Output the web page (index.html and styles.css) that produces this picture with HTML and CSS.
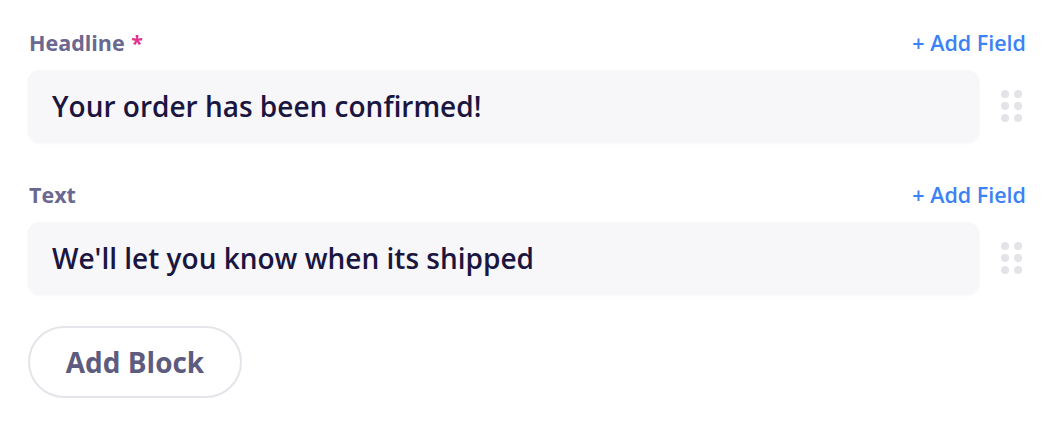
FILE: index.html
```html
<!DOCTYPE html>
<html>
<head>
<meta charset="utf-8">
<link rel="stylesheet" href="styles.css">
</head>
<body>
<div class="form">
  <div class="field">
    <div class="field-head">
      <span class="label">Headline <span class="req">*</span></span>
      <a class="add-field">+ Add Field</a>
    </div>
    <div class="field-row">
      <div class="input">Your order has been confirmed!</div>
      <div class="handle"><i></i><i></i><i></i><i></i><i></i><i></i></div>
    </div>
  </div>
  <div class="field">
    <div class="field-head">
      <span class="label">Text</span>
      <a class="add-field">+ Add Field</a>
    </div>
    <div class="field-row">
      <div class="input">We'll let you know when its shipped</div>
      <div class="handle"><i></i><i></i><i></i><i></i><i></i><i></i></div>
    </div>
  </div>
  <button class="add-block">Add Block</button>
</div>
</body>
</html>
```

FILE: styles.css
```css
html, body {
  margin: 0;
  padding: 0;
  background: #ffffff;
}
body {
  font-family: "Open Sans", "Noto Sans", sans-serif;
}
.form {
  padding: 28px 30px 0 28px;
  display: flex;
  flex-direction: column;
}
.field {
  display: flex;
  flex-direction: column;
  margin-bottom: 38px;
}
.field-head {
  display: flex;
  justify-content: space-between;
  align-items: baseline;
  height: 30px;
  margin-bottom: 12px;
  padding-left: 1px;
}
.label {
  font-size: 21.5px;
  font-weight: 700;
  color: #6a6890;
  line-height: 30px;
}
.req {
  color: #e0358d;
  margin-left: 1px;
}
.add-field {
  font-size: 21.5px;
  font-weight: 600;
  color: #3b82f6;
  line-height: 30px;
}
.field-row {
  display: flex;
  align-items: center;
  gap: 22px;
}
.input {
  flex: 1;
  height: 72px;
  box-sizing: border-box;
  padding: 0 24px;
  display: flex;
  align-items: center;
  background: #f7f7f9;
  border-radius: 12px;
  box-shadow: 0 1px 3px rgba(30, 30, 60, 0.06);
  font-size: 28px;
  font-weight: 600;
  color: #1b1640;
}
.handle {
  display: grid;
  grid-template-columns: 8px 8px;
  grid-auto-rows: 8px;
  gap: 4px 5px;
  margin-right: 4px;
}
.handle i {
  width: 8px;
  height: 8px;
  border-radius: 50%;
  background: #e3e3e8;
}
.add-block {
  align-self: flex-start;
  margin-top: -6px;
  width: 214px;
  height: 72px;
  border: 2px solid #e4e4ea;
  border-radius: 36px;
  background: #ffffff;
  font-family: "Open Sans", "Noto Sans", sans-serif;
  font-size: 28px;
  font-weight: 700;
  color: #5d5b7e;
  padding: 0;
}
```
